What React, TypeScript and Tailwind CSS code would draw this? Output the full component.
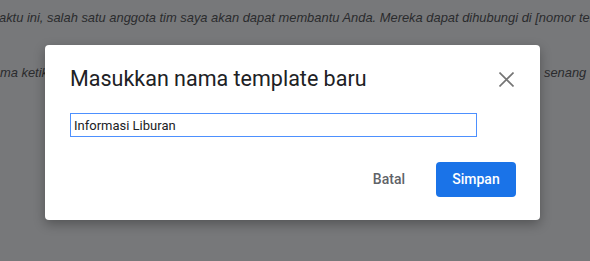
export default function App() {
  return (
    <div className="relative h-[261px] w-[590px] overflow-hidden bg-[#77787a] font-['Liberation_Sans',Arial,sans-serif]">
      <div className="whitespace-nowrap pt-[10px] text-[12.9px] italic text-[#2a2b2d]">
        <p className="-ml-[1px] leading-[16px]">
          aktu ini, salah satu anggota tim saya akan dapat membantu Anda. Mereka dapat dihubungi di [nomor telepon]
        </p>
        <p className="mt-[39px] flex leading-[16px]">
          <span className="w-[544px] shrink-0">ma ketika</span>
          <span className="shrink-0">senang ...</span>
        </p>
      </div>

      <div className="absolute left-[45px] top-[45px] flex h-[175px] w-[495px] flex-col rounded-[4px] bg-white px-[25px] shadow-[0_4px_12px_rgba(0,0,0,0.3)]">
        <div className="flex items-start justify-between pt-[20px]">
          <h2 className="font-['Roboto',sans-serif] text-[21.5px] leading-[28px] text-[#202124]">
            Masukkan nama template baru
          </h2>
          <button className="mr-[1px] mt-[7px] text-[#757575]" aria-label="Tutup">
            <svg width="15" height="15" viewBox="0 0 15 15" fill="none" stroke="currentColor" strokeWidth="1.6">
              <path d="M0.5 0.5 L14.5 14.5 M14.5 0.5 L0.5 14.5" />
            </svg>
          </button>
        </div>

        <input
          defaultValue="Informasi Liburan"
          className="mt-[20px] h-[24px] w-[407px] border border-[#4d90fe] px-[3px] font-['Roboto',sans-serif] text-[13px] text-[#202124] outline-none"
        />

        <div className="mt-[25px] flex items-center justify-end gap-[31px] font-['Roboto',sans-serif] text-[14px] font-medium">
          <button className="text-[#5f6368]">Batal</button>
          <button className="-mr-[1px] h-[35px] w-[80px] rounded-[4px] bg-[#1a73e8] text-white">Simpan</button>
        </div>
      </div>
    </div>
  )
}
